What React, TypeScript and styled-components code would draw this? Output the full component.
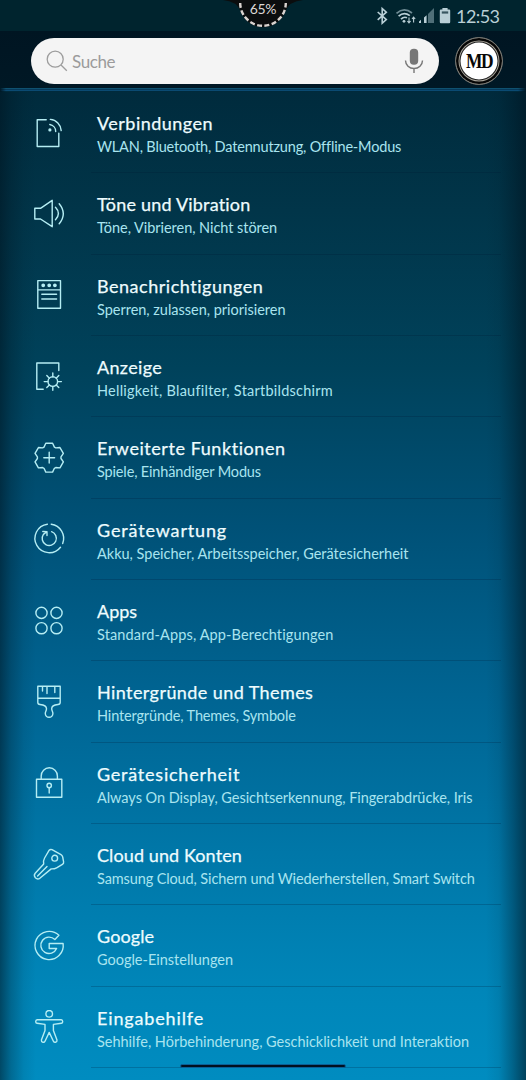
import React from 'react';
import styled, { createGlobalStyle } from 'styled-components';

const GlobalStyle = createGlobalStyle`
  * { box-sizing: border-box; }
  body { margin: 0; background: #002a3c; font-family: Lato, 'Open Sans', sans-serif; }
`;

const Screen = styled.main`
  position: relative;
  width: 526px;
  height: 1080px;
  overflow: hidden;
  display: flex;
  flex-direction: column;
`;

const StatusBar = styled.div`
  flex: none;
  height: 31px;
  padding: 1px 27px 0 0;
  background: #00242e;
  display: flex;
  justify-content: flex-end;
  align-items: center;
`;

const StatusIcons = styled.svg`
  width: 80px;
  height: 24px;
  display: block;
`;

const Clock = styled.time`
  width: 43px;
  font-size: 18px;
  line-height: 24px;
  letter-spacing: -0.55px;
  color: #b9cfd6;
  white-space: nowrap;
`;

const Notch = styled.svg`
  position: absolute;
  top: 0;
  left: 223px;
  width: 80px;
  height: 30px;
`;

const NotchText = styled.span`
  position: absolute;
  top: 0;
  left: 238px;
  width: 50px;
  text-align: center;
  font-size: 14px;
  line-height: 18px;
  letter-spacing: -0.4px;
  color: #dcd8d6;
`;

const Header = styled.header`
  flex: none;
  height: 61px;
  padding: 7px 23px 0 31px;
  display: flex;
  align-items: flex-start;
  gap: 16px;
  background:
    linear-gradient(90deg, #001825, transparent 6px, transparent 518px, #001825) 0 57px / 100% 4px no-repeat,
    linear-gradient(#001522, #001825 57px, #0f5170 57px, #0f5170 58px, #06395a 58px, #06395a 59px, #0a4a72 59px, #0a4a72 60px, #002a3c 60px);
`;

const SearchField = styled.div`
  width: 408px;
  height: 46px;
  border-radius: 23px;
  background: #f4f4f4;
  display: flex;
  align-items: center;
  padding: 0 14px 0 15px;
  color: #9b9b9b;
  font-size: 17px;
`;

const SearchLabel = styled.span`
  flex: 1;
  padding-left: 4px;
  letter-spacing: -0.4px;
`;

const SearchGlyph = styled.svg`
  width: 22px;
  height: 22px;
`;

const MicGlyph = styled.svg`
  width: 22px;
  height: 28px;
`;

const Avatar = styled.div`
  flex: none;
  width: 48px;
  height: 48px;
  margin-top: -1px;
  border-radius: 50%;
  border: 1px solid #6f6f69;
  background: #fff;
  box-shadow: inset 0 0 0 2.5px #050505, inset 0 0 0 3.5px #a8a49a, inset 0 0 0 4.5px #222;
  display: flex;
  align-items: center;
  justify-content: center;
  color: #080808;
`;

const Monogram = styled.span`
  font: bold 20px/1 'Liberation Serif', serif;
  letter-spacing: -1.5px;
  transform: scaleX(0.87);
`;

const List = styled.ul`
  flex: 1;
  margin: 0;
  padding: 0;
  list-style: none;
  background:
    linear-gradient(90deg, rgba(0, 20, 32, 0.56), rgba(0, 20, 32, 0.28) 11px, rgba(0, 20, 32, 0.08) 24px, transparent 36px,
      transparent 486px, rgba(0, 20, 32, 0.08) 499px, rgba(0, 20, 32, 0.34) 513px, rgba(0, 20, 32, 0.62)),
    linear-gradient(#002b3d, #013549 12%, #00425b 28%, #005177 44%, #006492 61%, #0077a8 77%, #0086b9 91%, #008cc0);
`;

const Row = styled.li`
  height: 81.35px;
  display: flex;
  align-items: center;
  padding: 0 25px 0 31.5px;
`;

const RowIcon = styled.svg`
  flex: none;
  width: 34px;
  height: 34px;
  fill: none;
  stroke: #b5edf3;
  stroke-width: 1.4;
  stroke-linecap: round;
  stroke-linejoin: round;
`;

const RowBody = styled.div`
  flex: 1;
  align-self: stretch;
  margin-left: 25px;
  padding: 19px 0 0 6.5px;
  border-bottom: 1px solid rgba(0, 25, 50, 0.22);
  white-space: nowrap;
  font-variant-ligatures: none;
`;

const Title = styled.div<{ $tracking: number }>`
  font-size: 18px;
  line-height: 24px;
  letter-spacing: ${(p) => p.$tracking}px;
  color: #eefcfe;
  -webkit-text-stroke: 0.25px #eefcfe;
`;

const Summary = styled.div<{ $tracking: number }>`
  margin-top: 1px;
  font-size: 14.5px;
  line-height: 22px;
  letter-spacing: ${(p) => p.$tracking}px;
  color: #a9e4ef;
`;

const HomeBar = styled.div`
  position: absolute;
  left: 180px;
  bottom: 12px;
  width: 166px;
  height: 4px;
  border-radius: 2px;
  background: #01101f;
  border: 1px solid #0b5f96;
`;

const gearPath = (() => {
  const tooth = [[-5.2, -10.6], [-3.4, -14.4], [3.4, -14.4], [5.2, -10.6]];
  const points: string[] = [];
  for (let i = 0; i < 6; i++) {
    const a = (i * Math.PI) / 3;
    tooth.forEach(([x, y]) =>
      points.push(`${(17.2 + x * Math.cos(a) - y * Math.sin(a)).toFixed(2)} ${(16.7 + x * Math.sin(a) + y * Math.cos(a)).toFixed(2)}`));
  }
  return `M${points.join('L')}Z`;
})();

const icons = {
  connections: (
    <>
      <path d="M14.2 3.8H5.2V30.5H26.8V17.2M17.8 8.5a7 7 0 0 1 5.9 7M18.3 3.4a11.8 11.8 0 0 1 10.9 11.2" />
      <circle cx="17.9" cy="13.9" r=".9" fill="#b5edf3" />
    </>
  ),
  sound: <path d="M2.8 11.3H8.5L20.2 3.3V29.7L8.5 22H2.8ZM23.5 10.3q5.8 6.2 0 12.4M27.2 6.7q8.2 10 0 20" />,
  notifications: (
    <>
      <path d="M5.8 2.6H28.5V30.3H5.8ZM5.8 11.9H28.5M9.8 16.3H24.6M9.8 21H24.6" />
      <g fill="#b5edf3">
        <circle cx="11.2" cy="7.3" r="1.2" />
        <circle cx="17.2" cy="7.3" r="1.2" />
        <circle cx="22.9" cy="7.3" r="1.2" />
      </g>
    </>
  ),
  display: (
    <>
      <path d="M11.2 29.3H4.8V3H26.8V10.6" />
      <circle cx="20.8" cy="21.6" r="4.8" />
      <path d="M20.8 16.8V13M20.8 26.4V30.2M16 21.6H12.2M25.6 21.6H29.4M17.4 18.2L14.8 15.6M24.2 18.2L26.8 15.6M17.4 25L14.8 27.6M24.2 25L26.8 27.6" />
    </>
  ),
  features: <path d={`${gearPath}M17.2 11.3V22.1M11.8 16.7H22.6`} />,
  care: (
    <path d="M19.2 2.2A14.3 14.3 0 0 1 30.7 21.5M28.5 25.2A14.3 14.3 0 1 1 15.4 2.2M19.6 9.7A7.1 7.1 0 1 1 11.4 12.4L14.8 9.8M10.8 9.5L15 9.6V13.6" />
  ),
  apps: (
    <>
      <circle cx="9.5" cy="8.9" r="5.6" />
      <circle cx="24.5" cy="8.9" r="5.6" />
      <circle cx="9.5" cy="24.2" r="5.6" />
      <circle cx="24.5" cy="24.2" r="5.6" />
    </>
  ),
  themes: (
    <path d="M5.8 1.2H28.2V17.6Q28.2 19.4 26 19.5C22.5 19.8 19.6 21 19.7 23.8C19.7 26 20.9 26.6 20.9 28.5A3.8 3.8 0 0 1 13.3 28.5C13.3 26.6 14.5 26 14.5 23.8C14.5 21 11.5 19.8 8 19.5Q5.8 19.4 5.8 17.6ZM5.8 13.2H28.2M10.5 1.4V6M15 1.4V8.5M22.8 1.4V7.5" />
  ),
  security: (
    <>
      <path d="M4.5 13.2H29.8V31.2H4.5ZM9.2 13V9.9a8.1 8.1 0 0 1 16.2 0V13M17.2 21.8V27" />
      <circle cx="17.2" cy="19.5" r="2.2" />
    </>
  ),
  accounts: (
    <>
      <path d="M17.2 2.2Q18.3 1 20 1.7L29 6.7Q30.3 7.5 30.7 9L31.6 13.8Q31.9 15.5 30.4 16.4L24.6 19.8Q22.5 21 19.2 20.9L7.8 30.3Q5.5 31.8 3.4 29.8Q1.4 27.3 3.2 25.3L11.7 16Q11 12.6 12.6 10ZM5.6 28.1L15 18.6" />
      <circle cx="22.7" cy="10.2" r="2.9" />
    </>
  ),
  google: (
    <path d="M26.9 6.3A14.1 14.1 0 1 0 31.1 14.5H17.2V19.5H24.6A8.2 8.2 0 1 1 22.9 10.6Z" />
  ),
  accessibility: (
    <>
      <circle cx="17.2" cy="3.8" r="3.3" />
      <path d="M5.2 9.8H29.2A1.8 1.8 0 0 1 29.4 13.3L21.4 14.4V20.5L25 30.1Q25.2 32 23.5 32.3Q22 32.5 21.4 31.2L17.2 22.4L13 31.2Q12.4 32.5 10.9 32.3Q9.2 32 9.4 30.1L13 20.5V14.4L5 13.3A1.8 1.8 0 0 1 5.2 9.8Z" />
    </>
  ),
};

type Entry = {
  icon: keyof typeof icons;
  title: string;
  summary: string;
  titleTracking: number;
  summaryTracking: number;
};

const entries: Entry[] = [
  { icon: 'connections', title: 'Verbindungen', summary: 'WLAN, Bluetooth, Datennutzung, Offline-Modus', titleTracking: 0.48, summaryTracking: -0.17 },
  { icon: 'sound', title: 'Töne und Vibration', summary: 'Töne, Vibrieren, Nicht stören', titleTracking: 0.2, summaryTracking: -0.05 },
  { icon: 'notifications', title: 'Benachrichtigungen', summary: 'Sperren, zulassen, priorisieren', titleTracking: 0.52, summaryTracking: -0.02 },
  { icon: 'display', title: 'Anzeige', summary: 'Helligkeit, Blaufilter, Startbildschirm', titleTracking: 0.33, summaryTracking: 0.24 },
  { icon: 'features', title: 'Erweiterte Funktionen', summary: 'Spiele, Einhändiger Modus', titleTracking: 0.56, summaryTracking: -0.15 },
  { icon: 'care', title: 'Gerätewartung', summary: 'Akku, Speicher, Arbeitsspeicher, Gerätesicherheit', titleTracking: 0.85, summaryTracking: 0 },
  { icon: 'apps', title: 'Apps', summary: 'Standard-Apps, App-Berechtigungen', titleTracking: 0, summaryTracking: 0.13 },
  { icon: 'themes', title: 'Hintergründe und Themes', summary: 'Hintergründe, Themes, Symbole', titleTracking: 0.42, summaryTracking: -0.15 },
  { icon: 'security', title: 'Gerätesicherheit', summary: 'Always On Display, Gesichtserkennung, Fingerabdrücke, Iris', titleTracking: 0.77, summaryTracking: -0.05 },
  { icon: 'accounts', title: 'Cloud und Konten', summary: 'Samsung Cloud, Sichern und Wiederherstellen, Smart Switch', titleTracking: 0.1, summaryTracking: -0.12 },
  { icon: 'google', title: 'Google', summary: 'Google-Einstellungen', titleTracking: 0.1, summaryTracking: 0 },
  { icon: 'accessibility', title: 'Eingabehilfe', summary: 'Sehhilfe, Hörbehinderung, Geschicklichkeit und Interaktion', titleTracking: 0.86, summaryTracking: -0.02 },
];

export default function App() {
  return (
    <>
      <GlobalStyle />
      <Screen>
        <StatusBar>
          <StatusIcons viewBox="0 0 80 24" fill="none" stroke="#b9cfd6" strokeWidth="1.6">
            <path d="M1.7 8L10.3 15.6L6.2 19.2V4.6L10.3 8.2L1.7 15.8" />
            <path d="M20.5 9.3Q28 2.6 36 9" stroke="#6f8c95" strokeWidth="1.7" />
            <path d="M22.6 12.2Q28 7.2 33.8 11.6M25 15.2Q28 12.2 31 13.8" strokeWidth="1.7" />
            <circle cx="28" cy="17.3" r="1.4" fill="#b9cfd6" stroke="none" />
            <path d="M33 13.4V18.6M31.4 17L33 18.8L34.6 17M37.6 18.6V13.4M36 15L37.6 13.2L39.2 15" strokeWidth="1.1" />
            <path d="M58 4V19H52V10Z" fill="#4f6f78" stroke="none" />
            <path d="M43 19V17.4L45 15.8V19ZM48 19V13.6L50.6 11.2V19Z" fill="#b9cfd6" stroke="none" />
            <path d="M66.4 4H71.6V5.6H73.2Q74.2 5.6 74.2 6.6V18Q74.2 19.2 73.2 19.2H64.8Q63.8 19.2 63.8 18V6.6Q63.8 5.6 64.8 5.6H66.4Z" fill="#b9cfd6" stroke="none" />
            <path d="M65.8 7.4H72.2V9.6H65.8Z" fill="#38565f" stroke="none" />
          </StatusIcons>
          <Clock>12:53</Clock>
        </StatusBar>
        <Header>
          <SearchField>
            <SearchGlyph viewBox="0 0 22 22" fill="none" stroke="#9d9d9d" strokeWidth="1.3">
              <circle cx="9.2" cy="9.2" r="8" />
              <path d="M15 15L20.8 20.8" />
            </SearchGlyph>
            <SearchLabel>Suche</SearchLabel>
            <MicGlyph viewBox="0 0 22 28" fill="none" stroke="#777" strokeWidth="1.4">
              <rect x="6.8" y="1.7" width="8.4" height="16" rx="4" fill="#777" stroke="none" />
              <path d="M2.5 13.5a8.5 8 0 0 0 17 0M11 21.5V26" />
            </MicGlyph>
          </SearchField>
          <Avatar>
            <Monogram>MD</Monogram>
          </Avatar>
        </Header>
        <List>
          {entries.map((e) => (
            <Row key={e.title}>
              <RowIcon viewBox="0 0 34 34">{icons[e.icon]}</RowIcon>
              <RowBody>
                <Title $tracking={e.titleTracking}>{e.title}</Title>
                <Summary $tracking={e.summaryTracking}>{e.summary}</Summary>
              </RowBody>
            </Row>
          ))}
        </List>
        <Notch viewBox="0 0 80 30">
          <path d="M0 0Q14 1 18 12A23.5 23.5 0 0 0 62 12Q66 1 80 0Z" fill="#0b0d0e" />
          <path d="M17.2 3A22.8 22.8 0 0 0 62.8 3" fill="none" stroke="#d9d3cf" strokeWidth="2.4" strokeDasharray="5 2.4" />
        </Notch>
        <NotchText>65%</NotchText>
        <HomeBar />
      </Screen>
    </>
  );
}
